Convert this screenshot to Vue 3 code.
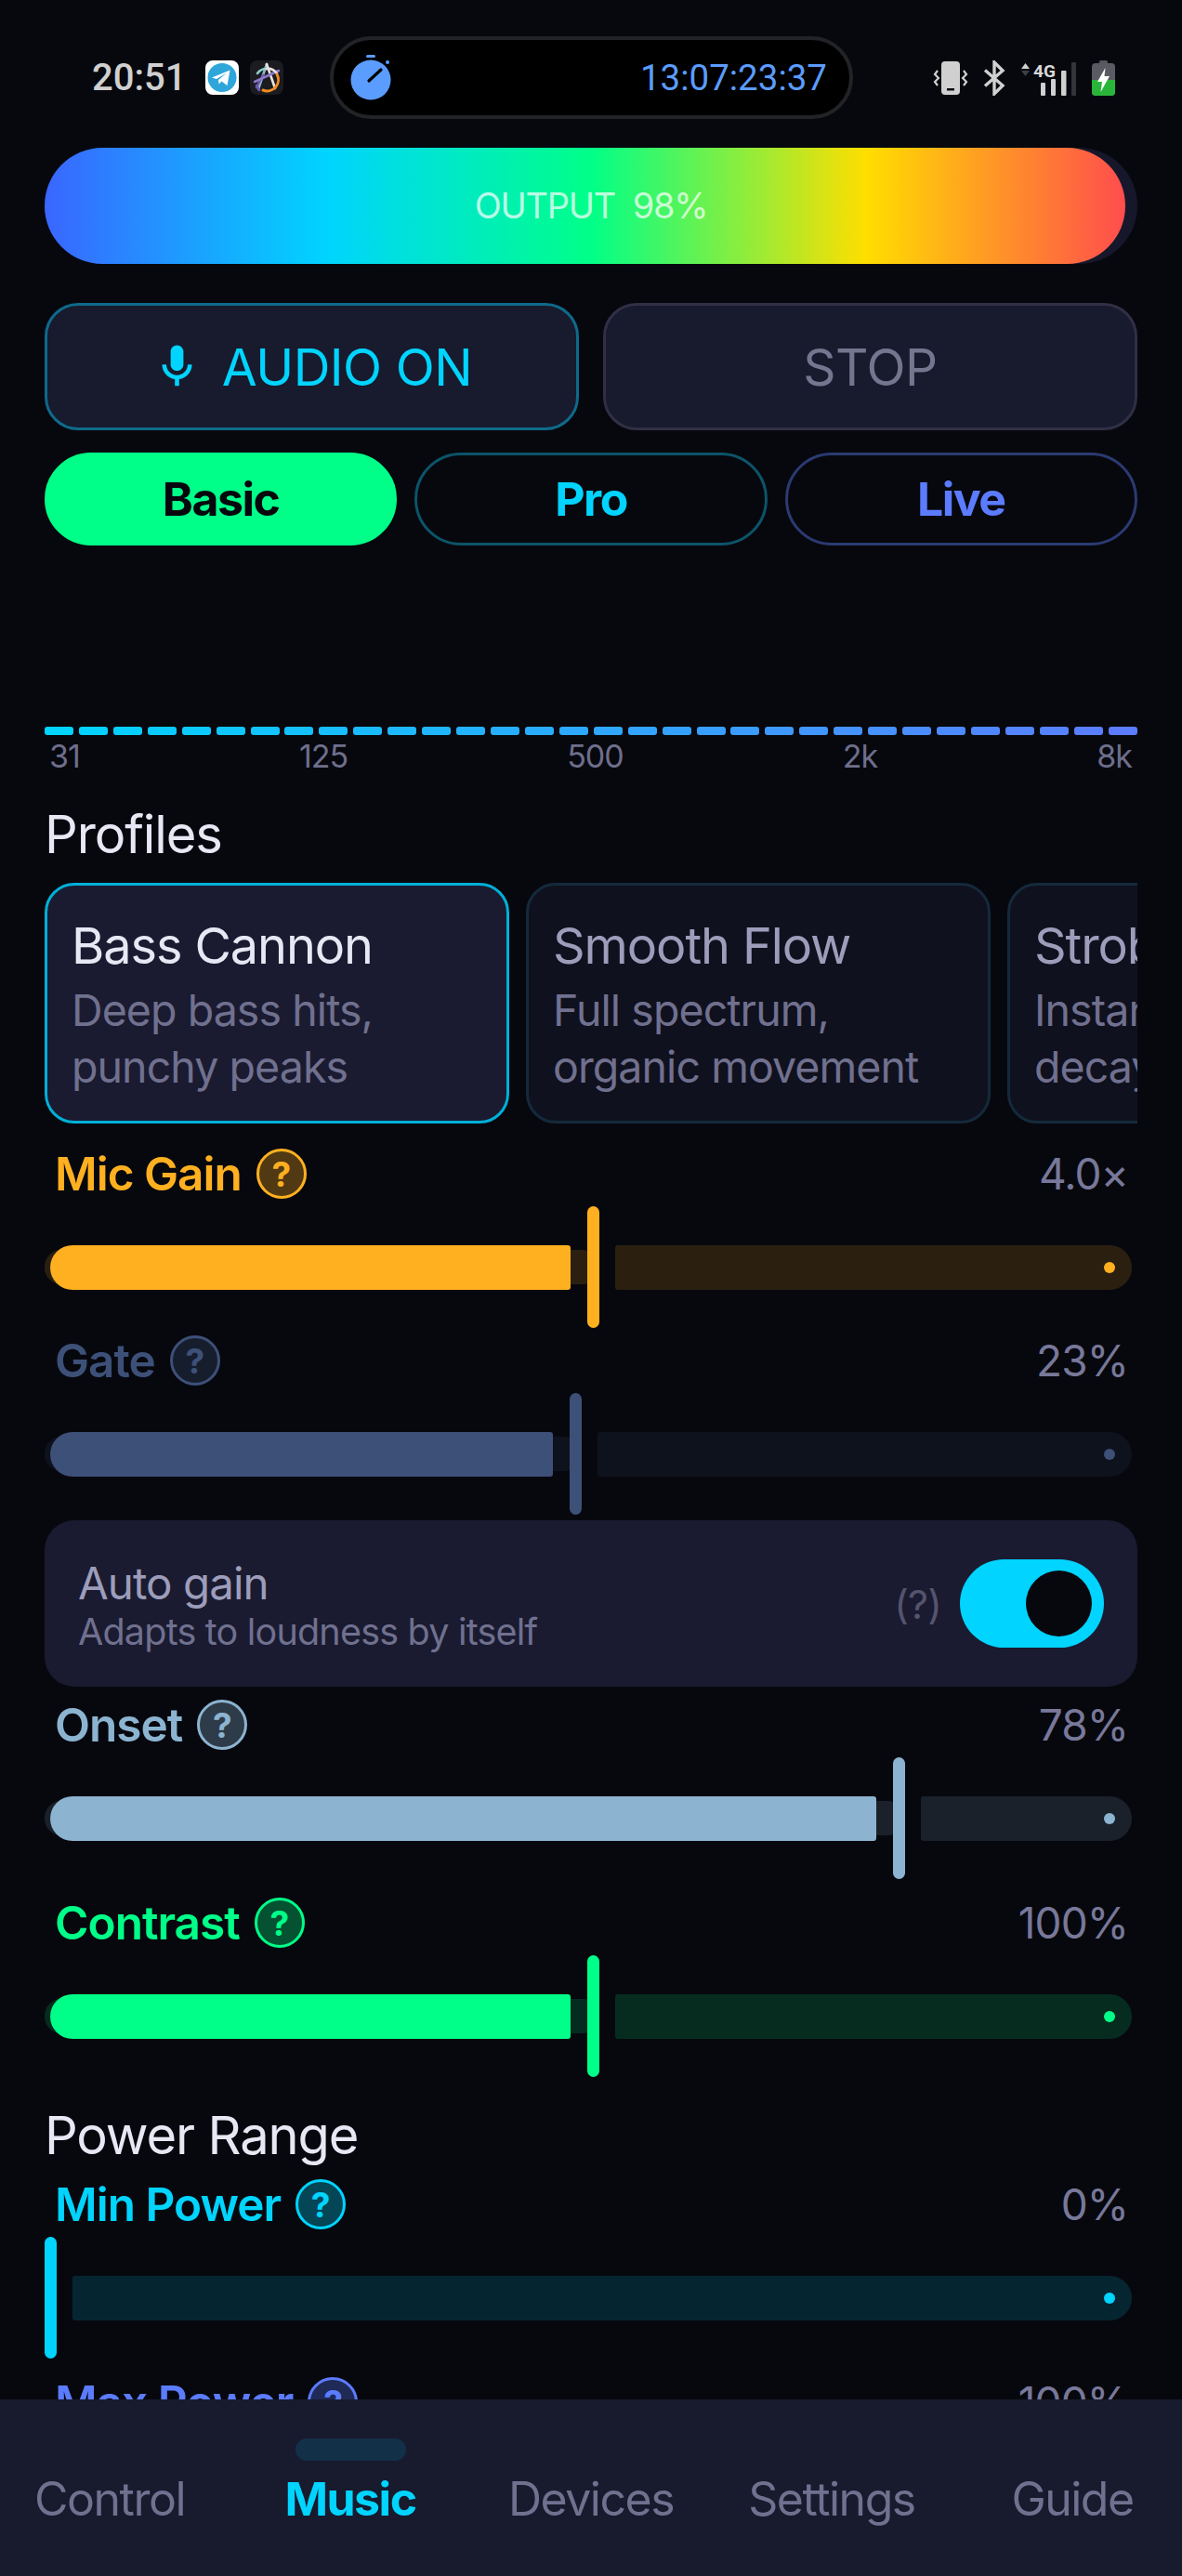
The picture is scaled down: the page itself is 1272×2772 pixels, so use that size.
<template>
  <div class="app">
    <div class="content">
      <div class="status-bar">
        <span class="clock">20:51</span>
        <svg class="notif" width="36" height="37" viewBox="0 0 36 37">
          <rect width="36" height="37" rx="8" fill="#fff" />
          <circle cx="18" cy="18.5" r="15.5" fill="#2ea6da" />
          <path d="M7 18.5 26.5 10.5 23.5 27 17.5 22.5 14.5 25.5 14 21 23 13.5 12 20Z" fill="#fff" />
        </svg>
        <svg class="notif second" width="36" height="37" viewBox="0 0 36 37" fill="none" stroke-width="2.6" stroke-linecap="round">
          <rect width="36" height="37" rx="8" fill="#1b1b20" stroke="none" />
          <path d="M18 4 9 31" stroke="#8fb8c8" />
          <path d="M14 16 7 29" stroke="#6a58b0" />
          <path d="M18 4 27 30" stroke="#ece4dc" />
          <path d="M5 23 31 11" stroke="#8a78c8" />
          <path d="M8 14A12 12 0 0 1 18 9" stroke="#8fd0c8" />
          <path d="M18 9A12 12 0 0 1 29 14" stroke="#e8e0e0" />
          <path d="M29 15A12 12 0 0 1 14 32" stroke="#f08a20" stroke-width="3" />
          <path d="M7 27 10 32" stroke="#6a58b0" />
        </svg>
        <div class="timer-pill">
          <svg width="44" height="52" viewBox="0 0 44 52">
            <rect x="17" y="1" width="10" height="3" rx="1.5" fill="#5b9cff" />
            <circle cx="40" cy="9" r="2" fill="#5b9cff" />
            <circle cx="22" cy="28" r="21.5" fill="#5b9cff" />
            <path d="M20 29 33 17" stroke="#000" stroke-width="3.2" stroke-linecap="round" />
          </svg>
          <span class="timer-text">13:07:23:37</span>
        </div>
        <div class="status-icons">
          <svg width="38" height="38" viewBox="0 0 38 38" fill="none">
            <rect x="9" y="1" width="20" height="36" rx="4" fill="#d0d0d0" />
            <rect x="15" y="30" width="8" height="2.5" fill="#0a0b12" />
            <path d="M5 11 2 15 6 19 2 23 5 27M33 11 36 15 32 19 36 23 33 27" stroke="#d0d0d0" stroke-width="2.2" />
          </svg>
          <svg class="bt" width="24" height="38" viewBox="0 0 24 38" fill="none">
            <path d="M2 10.500 21 27 12 36V2L21 11 2 27.500" stroke="#d0d0d0" stroke-width="3.4" />
          </svg>
          <svg class="signal" width="60" height="38" viewBox="0 0 60 38">
            <path d="M1 9 5.500 3 10 9Z" fill="#cfcfcf" />
            <path d="M1 11 5.500 17 10 11Z" fill="#3e3e44" />
            <text x="14" y="17.500" class="net">4G</text>
            <rect x="22" y="24" width="5" height="14" rx="1" fill="#d0d0d0" />
            <rect x="33" y="20" width="5" height="18" rx="1" fill="#d0d0d0" />
            <rect x="44" y="11" width="5.500" height="27" rx="1" fill="#d0d0d0" />
            <rect x="55" y="2" width="5" height="36" rx="1" fill="#33343a" />
          </svg>
          <svg class="battery" width="25" height="38" viewBox="0 0 25 38">
            <rect x="8" y="0" width="9" height="5" rx="1.500" fill="#55565c" />
            <rect x="0" y="3" width="25" height="35" rx="4" fill="#5a5b62" />
            <path d="M0 21H25V34a4 4 0 0 1-4 4H4a4 4 0 0 1-4-4Z" fill="#2ab53a" />
            <path d="M14.500 8 6 23H11L9.500 34 19 17H13.500Z" fill="#fff" />
          </svg>
        </div>
      </div>

      <div class="page">
        <div class="output-track">
          <div class="output-fill">OUTPUT&nbsp; 98%</div>
        </div>

        <div class="actions">
          <button class="action on">
            <svg width="55" height="55" viewBox="0 0 24 24" fill="currentColor">
              <path d="M12 14c1.660 0 3-1.340 3-3V5c0-1.660-1.340-3-3-3S9 3.340 9 5v6c0 1.660 1.340 3 3 3zM17 11c0 2.760-2.240 5-5 5s-5-2.240-5-5H5c0 3.530 2.610 6.430 6 6.920V21h2v-3.080c3.390-.49 6-3.390 6-6.920h-2z" />
            </svg>
            AUDIO ON
          </button>
          <button class="action stop">STOP</button>
        </div>

        <div class="modes">
          <button class="mode basic">Basic</button>
          <button class="mode pro">Pro</button>
          <button class="mode live">Live</button>
        </div>

        <div class="eq-bars">
          <span v-for="n in 32" :key="n" class="eq-bar" :style="{ background: eqColor(n - 1) }"></span>
        </div>
        <div class="eq-labels">
          <span>31</span><span>125</span><span>500</span><span>2k</span><span>8k</span>
        </div>

        <h2 class="section-title profiles-title">Profiles</h2>
        <div class="profiles">
          <div v-for="p in profiles" :key="p.name" class="profile" :class="{ active: p.active }">
            <div class="profile-name">{{ p.name }}</div>
            <div class="profile-desc">{{ p.line1 }}<br />{{ p.line2 }}</div>
          </div>
        </div>

        <template v-for="s in sliders" :key="s.name">
          <div class="slider-block" :style="{ '--c': s.color, marginTop: s.top + 'px' }">
            <div class="slider-head">
              <span class="slider-name">{{ s.name }}</span>
              <span class="help">?</span>
              <span class="slider-value">{{ s.value }}</span>
            </div>
            <div class="slider">
              <div v-if="s.fill" class="under" :style="{ width: s.fill + 36 + 'px' }"></div>
              <div v-if="s.fill" class="fill" :style="{ width: s.fill + 'px' }"></div>
              <div class="thumb"></div>
              <div class="rest"><span class="dot"></span></div>
            </div>
          </div>

          <div v-if="s.name === 'Gate'" class="auto-gain">
            <div class="auto-text">
              <div class="auto-title">Auto gain</div>
              <div class="auto-sub">Adapts to loudness by itself</div>
            </div>
            <span class="auto-help">(?)</span>
            <div class="toggle"><span class="knob"></span></div>
          </div>

          <h2 v-if="s.name === 'Contrast'" class="section-title power-title">Power Range</h2>
        </template>
      </div>
    </div>

    <nav class="tabbar">
      <div v-for="t in tabs" :key="t" class="tab" :class="{ current: t === 'Music' }">
        <span v-if="t === 'Music'" class="tab-pill"></span>
        {{ t }}
      </div>
    </nav>
  </div>
</template>

<script setup>
const profiles = [
  { name: 'Bass Cannon', line1: 'Deep bass hits,', line2: 'punchy peaks', active: true },
  { name: 'Smooth Flow', line1: 'Full spectrum,', line2: 'organic movement' },
  { name: 'Strobe Burst', line1: 'Instant flash,', line2: 'decay fast' }
]

const sliders = [
  { name: 'Mic Gain', value: '4.0×', color: '#ffb020', fill: 560, top: 27 },
  { name: 'Gate', value: '23%', color: '#3d5078', fill: 541, top: 8 },
  { name: 'Onset', value: '78%', color: '#8cb4d0', fill: 889, top: 14 },
  { name: 'Contrast', value: '100%', color: '#00ff88', fill: 560, top: 20 },
  { name: 'Min Power', value: '0%', color: '#00d4ff', fill: 0, top: 15 },
  { name: 'Max Power', value: '100%', color: '#5b7cff', fill: 1100, top: 20 }
]

const tabs = ['Control', 'Music', 'Devices', 'Settings', 'Guide']

// cyan to periwinkle across the 32 bands
const eqColor = (i) => {
  const t = i / 31
  const r = Math.round(0 + 91 * t)
  const g = Math.round(212 - 88 * t)
  return `rgb(${r}, ${g}, 255)`
}
</script>

<style>
html,
body {
  margin: 0;
  background: #07080e;
}
</style>

<style scoped>
.app {
  width: 1272px;
  height: 2772px;
  display: flex;
  flex-direction: column;
  overflow: hidden;
  background: #07080e;
  color: #e8e8f5;
  font-family: Inter, "Noto Sans", sans-serif;
}

.content {
  flex: 1;
  min-height: 0;
  overflow: hidden;
}

.status-bar {
  height: 89px;
  padding: 39px 0 0 99px;
  display: flex;
  align-items: center;
}

.clock {
  width: 122px;
  font-family: Roboto, sans-serif;
  font-weight: 500;
  font-size: 40px;
  color: #d0d0d0;
}

.notif {
  flex: none;
}

.second {
  margin-left: 12px;
}

.timer-pill {
  width: 563px;
  height: 89px;
  margin-left: 50px;
  padding: 0 24px 0 18px;
  box-sizing: border-box;
  display: flex;
  align-items: center;
  justify-content: space-between;
  background: #000;
  border: 4px solid #222326;
  border-radius: 45px;
}

.timer-text {
  font-family: Roboto, sans-serif;
  font-size: 38.500px;
  color: #5b9cff;
}

.status-icons {
  margin-left: 86px;
  display: flex;
  align-items: center;
}

.bt {
  margin-left: 16px;
}

.signal {
  margin-left: 16px;
}

.battery {
  margin-left: 17px;
}

.net {
  font-family: Roboto, sans-serif;
  font-weight: 700;
  font-size: 19px;
  fill: #d8d8d8;
}

.page {
  padding: 31px 48px 0;
}

.output-track {
  height: 125px;
  border-radius: 63px;
  background: #16172a;
}

.output-fill {
  width: 1163px;
  height: 125px;
  padding-left: 13px;
  padding-bottom: 2px;
  box-sizing: border-box;
  border-radius: 63px;
  display: flex;
  align-items: center;
  justify-content: center;
  font-size: 38px;
  letter-spacing: -0.034em;
  color: rgba(255, 255, 255, 0.72);
  background: linear-gradient(90deg, #3a66ff 0%, #00d4ff 26%, #00ff88 50.500%, #ffde00 76%, #ff4d4d 100%);
}

.actions {
  margin-top: 42px;
  display: flex;
  gap: 26px;
}

.action {
  flex: 1;
  height: 137px;
  display: flex;
  align-items: center;
  justify-content: center;
  gap: 21px;
  background: #181a2e;
  border-radius: 36px;
  font: 400 55px Inter, sans-serif;
  letter-spacing: -0.5px;
}

.action.on {
  border: 3px solid #0e6a8a;
  color: #00d4ff;
}

.action.stop {
  border: 3px solid #312f45;
  color: #75758f;
}

.modes {
  margin-top: 24px;
  display: flex;
  gap: 19px;
}

.mode {
  flex: 1;
  height: 100px;
  border-radius: 50px;
  background: transparent;
  font: 700 50px Inter, sans-serif;
  letter-spacing: -0.03em;
}

.mode.basic {
  background: #00ff88;
  border: 3px solid #00ff88;
  color: #06070d;
}

.mode.pro {
  border: 3px solid #0c5469;
  color: #00d4ff;
}

.mode.live {
  border: 3px solid #2b3a72;
  color: #5b7cff;
}

.eq-bars {
  margin-top: 195px;
  display: flex;
  justify-content: space-between;
}

.eq-bar {
  width: 31px;
  height: 9px;
  border-radius: 3px;
}

.eq-labels {
  margin-top: 4px;
  padding: 0 6px 0 5px;
  display: flex;
  justify-content: space-between;
  font-size: 34px;
  line-height: 38px;
  letter-spacing: -0.03em;
  color: #6e6e8c;
}

.section-title {
  margin: 0;
  font-weight: 400;
  font-size: 56px;
  line-height: 64px;
  letter-spacing: -0.02em;
  color: #e8e8f5;
}

.profiles-title {
  margin-top: 33px;
}

.power-title {
  margin-top: 31px;
}

.profiles {
  margin-top: 20px;
  display: flex;
  gap: 18px;
  overflow: hidden;
}

.profile {
  flex: none;
  width: 500px;
  height: 259px;
  padding: 33px 26px 0;
  box-sizing: border-box;
  background: #10111e;
  border: 3px solid #142a3c;
  border-radius: 32px;
}

.profile.active {
  background: #1a1b30;
  border-color: #00b0d8;
}

.profile-name {
  font-size: 54px;
  line-height: 64px;
  letter-spacing: -0.02em;
  color: #9d9dbb;
}

.active .profile-name {
  color: #e8e8f5;
}

.profile-desc {
  margin-top: 7px;
  font-size: 46.500px;
  line-height: 61px;
  letter-spacing: -0.02em;
  color: #70708f;
}

.slider-head {
  height: 54px;
  padding: 0 10px 0 11px;
  display: flex;
  align-items: center;
}

.slider-name {
  font-weight: 600;
  font-size: 49.500px;
  letter-spacing: -0.02em;
  color: var(--c);
}

.help {
  width: 54px;
  height: 54px;
  margin-left: 16px;
  box-sizing: border-box;
  display: flex;
  align-items: center;
  justify-content: center;
  border: 3px solid var(--c);
  border-radius: 50%;
  background: color-mix(in srgb, var(--c) 30%, transparent);
  font-weight: 700;
  font-size: 37px;
  color: var(--c);
}

.slider-value {
  margin-left: auto;
  font-size: 46px;
  letter-spacing: -0.02em;
  color: #78789a;
}

.slider {
  position: relative;
  height: 131px;
  margin-top: 8px;
  padding: 0 6px;
  display: flex;
  align-items: center;
}

.under {
  position: absolute;
  left: 0;
  top: 47px;
  height: 37px;
  border-radius: 18px;
  background: color-mix(in srgb, var(--c) 15%, transparent);
}

.fill {
  position: relative;
  flex: none;
  height: 48px;
  margin-right: 18px;
  border-radius: 24px 3px 3px 24px;
  background: var(--c);
}

.thumb {
  position: relative;
  flex: none;
  width: 13px;
  height: 131px;
  margin-right: 17px;
  border-radius: 7px;
  background: var(--c);
}

.thumb:first-child {
  margin-left: -6px;
}

.rest {
  position: relative;
  flex: 1;
  height: 48px;
  border-radius: 3px 24px 24px 3px;
  background: color-mix(in srgb, var(--c) 15%, transparent);
}

.dot {
  position: absolute;
  right: 18px;
  top: 18px;
  width: 12px;
  height: 12px;
  border-radius: 50%;
  background: var(--c);
}

.auto-gain {
  height: 179px;
  margin-top: 6px;
  padding: 0 36px;
  box-sizing: border-box;
  display: flex;
  align-items: center;
  background: #1a1b30;
  border-radius: 32px;
}

.auto-text {
  flex: 1;
  padding-top: 9px;
}

.auto-title {
  font-size: 47.500px;
  line-height: 52px;
  letter-spacing: -0.02em;
  color: #9d9dbb;
}

.auto-sub {
  font-size: 39.500px;
  line-height: 52px;
  letter-spacing: -0.02em;
  color: #70708f;
}

.auto-help {
  margin-right: 20px;
  font-size: 43px;
  letter-spacing: -0.02em;
  color: #54546f;
}

.toggle {
  width: 155px;
  height: 95px;
  padding: 12px 13px;
  box-sizing: border-box;
  display: flex;
  justify-content: flex-end;
  border-radius: 48px;
  background: #00d4ff;
}

.knob {
  width: 71px;
  height: 71px;
  border-radius: 50%;
  background: #07080e;
}

.tabbar {
  flex: none;
  height: 190px;
  display: grid;
  grid-template-columns: repeat(5, 259px);
  justify-content: center;
  overflow: hidden;
  background: #181a2e;
}

.tab {
  position: relative;
  padding-top: 79px;
  text-align: center;
  font-size: 50px;
  line-height: 56px;
  letter-spacing: -0.03em;
  color: #70708f;
}

.tab.current {
  font-weight: 700;
  color: #00d4ff;
}

.tab-pill {
  position: absolute;
  left: 70px;
  top: 42px;
  width: 119px;
  height: 24px;
  border-radius: 12px;
  background: #133049;
}
</style>
